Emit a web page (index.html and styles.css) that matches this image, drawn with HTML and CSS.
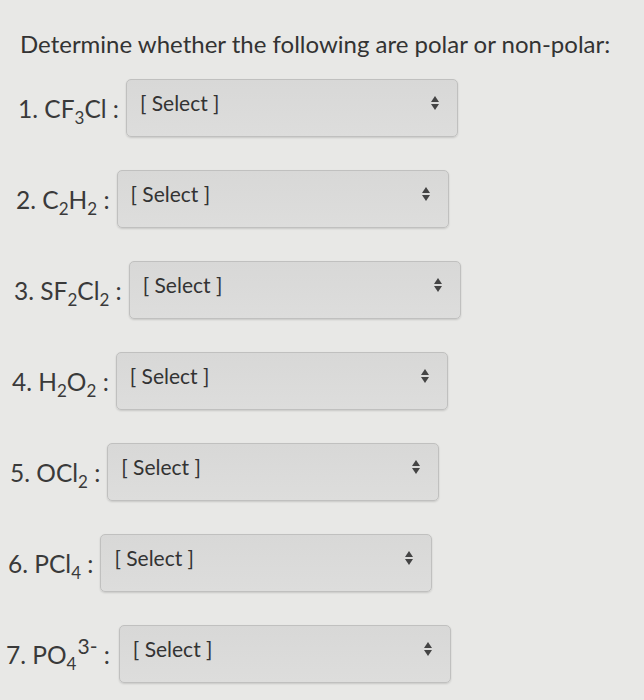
FILE: index.html
```html
<!DOCTYPE html>
<html>
<head>
<meta charset="utf-8">
<link rel="stylesheet" href="styles.css">
</head>
<body>
<div class="page">
  <h1 class="title">Determine whether the following are polar or non-polar:</h1>
  <div class="rows">
    <div class="row r1"><span class="label">1. CF<sub>3</sub>Cl :</span><div class="select"><span class="val">[ Select ]</span><span class="arrows"><i class="up"></i><i class="down"></i></span></div></div>
    <div class="row r2"><span class="label">2. C<sub>2</sub>H<sub>2</sub> :</span><div class="select"><span class="val">[ Select ]</span><span class="arrows"><i class="up"></i><i class="down"></i></span></div></div>
    <div class="row r3"><span class="label">3. SF<sub>2</sub>Cl<sub>2</sub> :</span><div class="select"><span class="val">[ Select ]</span><span class="arrows"><i class="up"></i><i class="down"></i></span></div></div>
    <div class="row r4"><span class="label">4. H<sub>2</sub>O<sub>2</sub> :</span><div class="select"><span class="val">[ Select ]</span><span class="arrows"><i class="up"></i><i class="down"></i></span></div></div>
    <div class="row r5"><span class="label">5. OCl<sub>2</sub> :</span><div class="select"><span class="val">[ Select ]</span><span class="arrows"><i class="up"></i><i class="down"></i></span></div></div>
    <div class="row r6"><span class="label">6. PCl<sub>4</sub> :</span><div class="select"><span class="val">[ Select ]</span><span class="arrows"><i class="up"></i><i class="down"></i></span></div></div>
    <div class="row r7"><span class="label">7. PO<sub>4</sub><sup>3-</sup> :</span><div class="select"><span class="val">[ Select ]</span><span class="arrows"><i class="up"></i><i class="down"></i></span></div></div>
  </div>
</div>
</body>
</html>
```

FILE: styles.css
```css
html, body {
  margin: 0;
  padding: 0;
  background: #e8e8e6;
}
body {
  font-family: Lato, "Open Sans", sans-serif;
  color: #3b3b3b;
  width: 644px;
  height: 700px;
  overflow: hidden;
}
.page {
  padding: 28px 0 0 20px;
}
.title {
  margin: 0;
  font-size: 24px;
  font-weight: 400;
  line-height: 32px;
  color: #333;
}
.rows {
  display: flex;
  flex-direction: column;
  gap: 33px;
  margin-top: 19px;
}
.row {
  display: flex;
  align-items: center;
  height: 58px;
}
.label {
  font-size: 24.5px;
  color: #3a3a3a;
  white-space: nowrap;
  margin-right: 7px;
}
.label sub {
  font-size: 17px;
  vertical-align: -6px;
  line-height: 0;
}
.label sup {
  font-size: 21px;
  vertical-align: 10px;
  line-height: 0;
  margin-left: 1px;
}
.select {
  box-sizing: border-box;
  width: 332px;
  height: 58px;
  border: 1px solid #c0c0bf;
  border-radius: 5px;
  background: linear-gradient(#d8d8d7, #dddddc);
  box-shadow: 0 1px 2px rgba(0,0,0,0.14);
  display: flex;
  align-items: flex-start;
  justify-content: space-between;
  padding: 10px 18px 0 13px;
}
.val {
  font-size: 21px;
  color: #333;
  line-height: 26px;
}
.arrows {
  display: flex;
  flex-direction: column;
  gap: 2px;
  margin-top: 6px;
}
.arrows i {
  display: block;
  width: 0;
  height: 0;
  border-left: 4.5px solid transparent;
  border-right: 4.5px solid transparent;
}
.arrows .up { border-bottom: 6px solid #444; }
.arrows .down { border-top: 6px solid #444; }
.r1 { margin-left: -2px; }
.r2 { margin-left: -4px; }
.r3 { margin-left: -6px; }
.r4 { margin-left: -8px; }
.r5 { margin-left: -10px; }
.r6 { margin-left: -12px; }
.r7 { margin-left: -14px; }
.r7 .select { margin-left: 2px; }
```
